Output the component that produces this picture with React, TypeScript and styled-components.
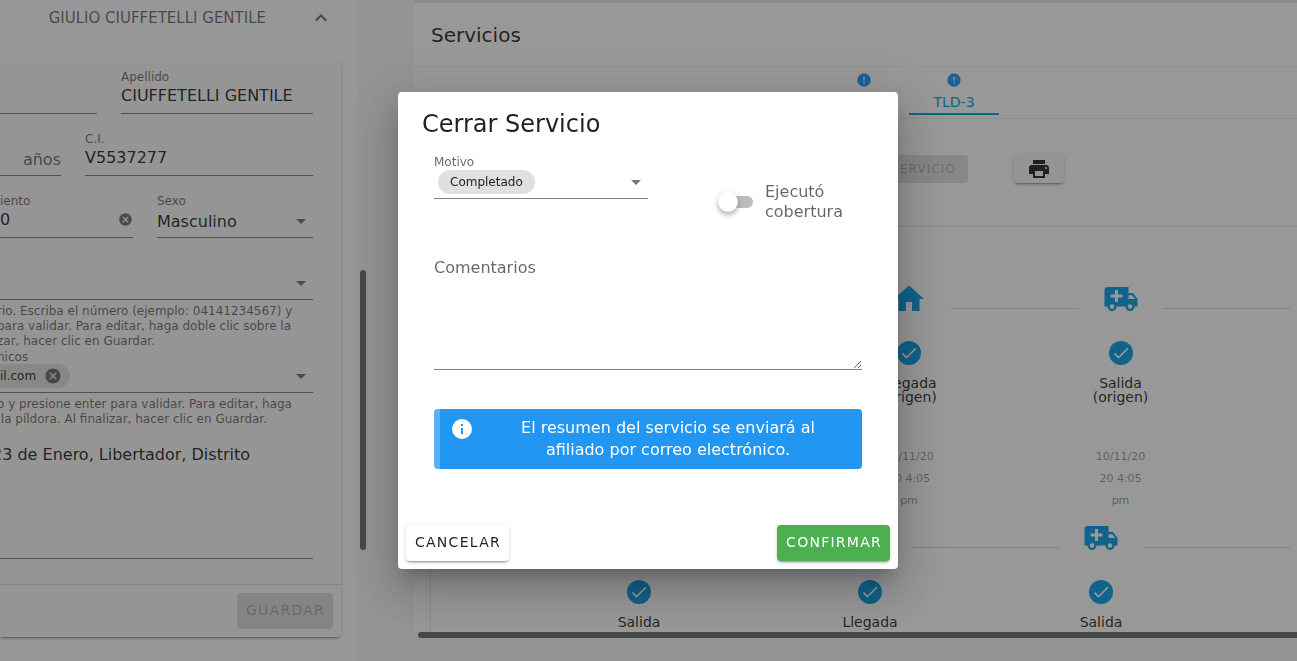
import React, { useState } from "react";
import styled, { createGlobalStyle } from "styled-components";

const ICONS = {
  home: "M10,20V14H14V20H19V12H22L12,3L2,12H5V20H10Z",
  ambulance:
    "M18,18.5A1.5,1.5 0 0,0 19.5,17A1.5,1.5 0 0,0 18,15.5A1.5,1.5 0 0,0 16.5,17A1.5,1.5 0 0,0 18,18.5M19.5,9.5H17V12H21.46L19.5,9.5M6,18.5A1.5,1.5 0 0,0 7.5,17A1.5,1.5 0 0,0 6,15.5A1.5,1.5 0 0,0 4.5,17A1.5,1.5 0 0,0 6,18.5M20,8L23,12V17H21A3,3 0 0,1 18,20A3,3 0 0,1 15,17H9A3,3 0 0,1 6,20A3,3 0 0,1 3,17H1V6C1,4.89 1.89,4 3,4H17V8H20M8,6V9H5V11H8V14H10V11H13V9H10V6H8Z",
  check: "M21,7L9,19L3.5,13.5L4.91,12.09L9,16.17L19.59,5.59L21,7Z",
  printer:
    "M18,3H6V7H18M19,12A1,1 0 0,1 18,11A1,1 0 0,1 19,10A1,1 0 0,1 20,11A1,1 0 0,1 19,12M16,19H8V14H16M19,8H5A3,3 0 0,0 2,11V17H6V21H18V17H22V11A3,3 0 0,0 19,8Z",
  alert:
    "M13,13H11V7H13M13,17H11V15H13M12,2A10,10 0 0,0 2,12A10,10 0 0,0 12,22A10,10 0 0,0 22,12A10,10 0 0,0 12,2Z",
  info: "M13,9H11V7H13M13,17H11V11H13M12,2A10,10 0 0,0 2,12A10,10 0 0,0 12,22A10,10 0 0,0 22,12A10,10 0 0,0 12,2Z",
  clear:
    "M12,2C17.53,2 22,6.47 22,12C22,17.53 17.53,22 12,22C6.47,22 2,17.53 2,12C2,6.47 6.47,2 12,2M15.59,7L12,10.59L8.41,7L7,8.41L10.59,12L7,15.59L8.41,17L12,13.41L15.59,17L17,15.59L13.41,12L17,8.41L15.59,7Z",
  down: "M7,10L12,15L17,10H7Z",
  up: "M7.41,15.41L12,10.83L16.59,15.41L18,14L12,8L6,14L7.41,15.41Z",
};

const Icon = ({ name, size = 24 }: { name: keyof typeof ICONS; size?: number }) => (
  <svg width={size} height={size} viewBox="0 0 24 24" fill="currentColor" aria-hidden="true">
    <path d={ICONS[name]} />
  </svg>
);

const Global = createGlobalStyle`
  *, *::before, *::after { box-sizing: border-box; }
  body {
    margin: 0;
    background: #f5f5f5;
    color: rgba(0, 0, 0, 0.87);
    font-family: "DejaVu Sans", sans-serif;
    font-size: 16px;
  }
  button, input, select, textarea { font: inherit; color: inherit; margin: 0; }
  svg { display: block; flex: none; }
`;

const Page = styled.div`
  display: flex;
  height: 100vh;
  overflow: hidden;
`;

/* ---------- affiliate panel ---------- */

const Side = styled.section`
  flex: none;
  width: 357px;
  overflow: hidden;
  background: #fcfcfc;
`;

const SideHeader = styled.button`
  display: flex;
  align-items: center;
  justify-content: flex-end;
  gap: 43px;
  width: 100%;
  height: 35px;
  padding: 0 24px 0 0;
  border: 0;
  background: none;
  font-size: 15px;
  color: rgba(0, 0, 0, 0.6);
`;

const SideCard = styled.form`
  margin: 25px 16px 0 0;
  background: #f8f8f8;
  border-radius: 0 4px 4px 0;
  box-shadow: 0 3px 1px -2px rgba(0, 0, 0, 0.2), 0 2px 2px 0 rgba(0, 0, 0, 0.14),
    0 1px 5px 0 rgba(0, 0, 0, 0.12);
`;

const SideBody = styled.div`
  padding: 8px 28px 25px 0;
`;

const FieldRow = styled.div<{ $columns: string }>`
  display: grid;
  grid-template-columns: ${(p) => p.$columns};
  gap: 24px;
  margin-bottom: 16px;
`;

const Contact = styled.div`
  margin-left: -3px;
`;

const Field = styled.div`
  display: flex;
  flex-direction: column;
  min-width: 0;
  border-bottom: 1px solid rgba(0, 0, 0, 0.5);
`;

const Label = styled.label`
  height: 16px;
  font-size: 12px;
  line-height: 18px;
  white-space: nowrap;
  color: rgba(0, 0, 0, 0.6);
`;

const Control = styled.div`
  display: flex;
  align-items: center;
  height: 22px;
  margin-bottom: 7px;
`;

const TextInput = styled.input`
  flex: 1;
  min-width: 0;
  height: 22px;
  padding: 0;
  border: 0;
  outline: 0;
  background: none;
`;

const Suffix = styled.span`
  padding-top: 4px;
  color: rgba(0, 0, 0, 0.6);
`;

const IconButton = styled.button`
  display: flex;
  padding: 0;
  border: 0;
  background: none;
  color: rgba(0, 0, 0, 0.54);
`;

const SelectBox = styled.div<{ $height: number; $gap: number }>`
  display: grid;
  grid-template-columns: 1fr 24px;
  align-items: center;
  height: ${(p) => p.$height}px;
  margin-bottom: ${(p) => p.$gap}px;

  > svg {
    grid-area: 1 / 2;
    color: rgba(0, 0, 0, 0.54);
    pointer-events: none;
  }
`;

const Select = styled.select<{ $chips?: boolean }>`
  grid-area: 1 / 1 / 2 / 3;
  width: 100%;
  height: 100%;
  padding: 0;
  border: 0;
  outline: 0;
  appearance: none;
  background: none;
  opacity: ${(p) => (p.$chips ? 0 : 1)};
`;

const Chip = styled.span<{ $open?: boolean }>`
  grid-area: 1 / 1;
  justify-self: start;
  display: flex;
  align-items: center;
  gap: 8px;
  height: 24px;
  margin-left: ${(p) => (p.$open ? 0 : 4)}px;
  padding: ${(p) => (p.$open ? "0 8px 0 3px" : "0 12px")};
  border-radius: ${(p) => (p.$open ? "0 12px 12px 0" : "12px")};
  background: #e0e0e0;
  font-size: 12px;
  pointer-events: none;
`;

const Hint = styled.p`
  margin: 4px 0 -1px;
  font-size: 12px;
  line-height: 15px;
  white-space: nowrap;
  color: rgba(0, 0, 0, 0.6);
`;

const Address = styled.textarea`
  display: block;
  width: calc(100% + 5px);
  height: 115px;
  margin: 18px 0 0 -5px;
  padding: 0;
  border: 0;
  border-bottom: 1px solid rgba(0, 0, 0, 0.5);
  outline: 0;
  resize: none;
  background: none;
  line-height: 22px;
`;

const SideFooter = styled.footer`
  display: flex;
  justify-content: flex-end;
  padding: 8px;
  border-top: 1px solid rgba(0, 0, 0, 0.12);
`;

const raised = `0 3px 1px -2px rgba(0, 0, 0, 0.2), 0 2px 2px 0 rgba(0, 0, 0, 0.14),
    0 1px 5px 0 rgba(0, 0, 0, 0.12)`;

const Button = styled.button<{ $tone?: "green" | "plain" }>`
  height: 36px;
  padding: 0 8px 2px 9px;
  border: 0;
  border-radius: 4px;
  background: ${(p) => (p.$tone === "green" ? "#4caf50" : "#fff")};
  box-shadow: ${raised};
  color: ${(p) => (p.$tone === "green" ? "#fff" : "rgba(0, 0, 0, 0.87)")};
  font-size: 14px;
  letter-spacing: 0.09em;

  &:disabled {
    background: rgba(0, 0, 0, 0.12);
    box-shadow: none;
    color: rgba(0, 0, 0, 0.26);
  }
`;

/* ---------- scroll bars ---------- */

const Gutter = styled.div`
  flex: none;
  width: 57px;
  padding: 270px 0 0 3px;
`;

const VerticalThumb = styled.div`
  width: 6px;
  height: 280px;
  border-radius: 3px;
  background: #6a6a6a;
`;

const HorizontalThumb = styled.div`
  flex: none;
  height: 6px;
  margin-left: 4px;
  border-radius: 3px 0 0 3px;
  background: #6a6a6a;
`;

/* ---------- services panel ---------- */

const Main = styled.main`
  flex: 1;
  min-width: 0;
  display: flex;
  flex-direction: column;
  padding-bottom: 23px;
  overflow: hidden;
`;

const Services = styled.section`
  flex: 1;
  min-height: 0;
  width: calc(100% + 107px);
  overflow: hidden;
  border-top: 3px solid #e6e6e6;
  border-radius: 4px 0 0 0;
  background: #fdfdfd;
`;

const ServicesTitle = styled.h2`
  height: 64px;
  margin: 0;
  padding-left: 17px;
  border-bottom: 1px solid rgba(0, 0, 0, 0.06);
  font-size: 20px;
  font-weight: 400;
  line-height: 64px;
`;

const Tabs = styled.nav`
  display: flex;
  justify-content: center;
  height: 52px;
  border-bottom: 1px solid rgba(0, 0, 0, 0.08);
`;

const Tab = styled.button<{ $active?: boolean }>`
  display: flex;
  flex-direction: column;
  align-items: center;
  gap: 6px;
  width: 90px;
  height: 48px;
  padding: 5px 0 0;
  border: 0;
  border-bottom: 2px solid ${(p) => (p.$active ? "#039be5" : "transparent")};
  background: none;
  color: ${(p) => (p.$active ? "#039be5" : "rgba(0, 0, 0, 0.54)")};
  font-size: 14px;

  svg {
    color: #2196f3;
  }
`;

const Actions = styled.div`
  display: flex;
  justify-content: center;
  gap: 46px;
  padding: 36px 0 44px;
`;

const ServiceButton = styled(Button)`
  width: 214px;
  height: 28px;
  padding: 0 12px;
  font-size: 12px;
  text-align: right;
`;

const PrintButton = styled(Button)`
  display: flex;
  align-items: center;
  justify-content: center;
  width: 50px;
  height: 28px;
  padding: 0;
  background: #f5f5f5;
`;

const Timeline = styled.div`
  display: flex;
  flex-direction: column;
  gap: 8px;
  margin: 0 30px 0 17px;
  padding-top: 54px;
  box-shadow: 0 0 2px rgba(0, 0, 0, 0.3);
`;

const Track = styled.ol<{ $start: number }>`
  display: flex;
  align-items: flex-start;
  margin: 0;
  padding: 0 0 0 ${(p) => p.$start}px;
  list-style: none;
`;

const Step = styled.li`
  flex: none;
  display: flex;
  flex-direction: column;
  align-items: center;
  width: 84px;
  color: #039be5;
  text-align: center;
`;

const Line = styled.li`
  flex: 1;
  height: 1px;
  margin-top: 27px;
  background: rgba(0, 0, 0, 0.16);
`;

const Done = styled.span`
  display: flex;
  align-items: center;
  justify-content: center;
  width: 24px;
  height: 24px;
  margin: 24px 0 11px;
  border-radius: 50%;
  background: #039be5;
  color: #fff;
`;

const StepLabel = styled.span`
  height: 28px;
  margin-bottom: 42px;
  font-size: 14px;
  line-height: 14px;
  color: rgba(0, 0, 0, 0.87);
`;

const StepDate = styled.time`
  font-size: 11px;
  line-height: 22px;
  color: rgba(0, 0, 0, 0.45);
`;

/* ---------- dialog ---------- */

const Overlay = styled.div`
  position: fixed;
  inset: 0;
  display: flex;
  align-items: center;
  justify-content: center;
  padding-right: 1px;
  background: rgba(33, 33, 33, 0.46);
`;

const Dialog = styled.div`
  width: 500px;
  max-width: 90%;
  border-radius: 4px;
  background: #fff;
  box-shadow: 0 11px 15px -7px rgba(0, 0, 0, 0.2), 0 24px 38px 3px rgba(0, 0, 0, 0.14),
    0 9px 46px 8px rgba(0, 0, 0, 0.12);
`;

const DialogTitle = styled.h1`
  margin: 0;
  padding: 16px 24px 13px;
  font-size: 24px;
  font-weight: 400;
  line-height: 32px;
`;

const DialogBody = styled.div`
  padding: 0 36px;
`;

const DialogRow = styled.div`
  display: grid;
  grid-template-columns: 1fr 142px;
  gap: 72px;
  align-items: start;
  margin-bottom: 36px;
`;

const SwitchLabel = styled.label`
  display: flex;
  align-items: center;
  gap: 12px;
  padding-top: 29px;
  line-height: 20px;
  color: rgba(0, 0, 0, 0.6);
`;

const Switch = styled.input`
  flex: none;
  display: flex;
  align-items: center;
  width: 33px;
  height: 12px;
  border-radius: 6px;
  appearance: none;
  background: #bdbdbd;

  &::before {
    content: "";
    width: 20px;
    height: 20px;
    margin-left: -2px;
    border-radius: 50%;
    background: #fff;
    box-shadow: 0 2px 4px -1px rgba(0, 0, 0, 0.2), 0 4px 5px 0 rgba(0, 0, 0, 0.14),
      0 1px 10px 0 rgba(0, 0, 0, 0.12);
  }

  &:checked::before {
    margin-left: 16px;
  }
`;

const Comments = styled.textarea`
  display: block;
  width: 100%;
  height: 112px;
  padding: 0;
  border: 0;
  border-bottom: 1px solid rgba(0, 0, 0, 0.5);
  outline: 0;
  resize: vertical;
  background: none;
  line-height: 20px;

  &::placeholder {
    color: rgba(0, 0, 0, 0.6);
    opacity: 1;
  }
`;

const Notice = styled.div`
  display: flex;
  align-items: flex-start;
  gap: 16px;
  margin-top: 39px;
  padding: 8px 16px 8px 10px;
  border-left: 6px solid #59b0f6;
  border-radius: 4px;
  background: #2196f3;
  color: #fff;
  line-height: 22px;

  p {
    flex: 1;
    margin: 0;
    text-align: center;
  }
`;

const DialogActions = styled.footer`
  display: flex;
  justify-content: space-between;
  margin-top: 48px;
  padding: 8px;
`;

type StepInfo = { icon: "home" | "ambulance"; label: string; place?: string; date?: string[] };

const date = ["10/11/20", "20 4:05", "pm"];

const firstLeg: StepInfo[] = [
  { icon: "home", label: "Llegada", place: "(origen)", date },
  { icon: "ambulance", label: "Salida", place: "(origen)", date },
];

const secondLeg: StepInfo[] = [
  { icon: "ambulance", label: "Salida" },
  { icon: "home", label: "Llegada" },
  { icon: "ambulance", label: "Salida" },
];

const Leg = ({ steps, start }: { steps: StepInfo[]; start: number }) => (
  <Track $start={start}>
    {steps.map((step, i) => (
      <React.Fragment key={i}>
        <Step>
          <Icon name={step.icon} size={36} />
          <Done>
            <Icon name="check" size={20} />
          </Done>
          <StepLabel>
            {step.label}
            <br />
            {step.place}
          </StepLabel>
          {step.date && (
            <StepDate>
              {step.date[0]}
              <br />
              {step.date[1]}
              <br />
              {step.date[2]}
            </StepDate>
          )}
        </Step>
        <Line aria-hidden="true" />
      </React.Fragment>
    ))}
    <Step aria-hidden="true" />
  </Track>
);

export default function App() {
  const [reason, setReason] = useState("Completado");
  return (
    <>
      <Global />
      <Page>
        <Side>
          <SideHeader type="button">
            GIULIO CIUFFETELLI GENTILE
            <Icon name="up" />
          </SideHeader>
          <SideCard>
            <SideBody>
              <FieldRow $columns="1fr 192px">
                <Field>
                  <Label />
                  <Control>
                    <TextInput aria-label="Nombre" />
                  </Control>
                </Field>
                <Field>
                  <Label htmlFor="apellido">Apellido</Label>
                  <Control>
                    <TextInput id="apellido" defaultValue="CIUFFETELLI GENTILE" />
                  </Control>
                </Field>
              </FieldRow>
              <FieldRow $columns="1fr 228px">
                <Field>
                  <Label />
                  <Control>
                    <TextInput aria-label="Edad" />
                    <Suffix>años</Suffix>
                  </Control>
                </Field>
                <Field>
                  <Label htmlFor="ci">C.I.</Label>
                  <Control>
                    <TextInput id="ci" defaultValue="V5537277" />
                  </Control>
                </Field>
              </FieldRow>
              <FieldRow $columns="1fr 156px">
                <Field>
                  <Label htmlFor="nacimiento">iento</Label>
                  <Control>
                    <TextInput id="nacimiento" defaultValue="0" />
                    <IconButton type="button" aria-label="Borrar fecha">
                      <Icon name="clear" size={15} />
                    </IconButton>
                  </Control>
                </Field>
                <Field>
                  <Label htmlFor="sexo">Sexo</Label>
                  <SelectBox $height={26} $gap={3}>
                    <Select id="sexo">
                      <option>Masculino</option>
                      <option>Femenino</option>
                    </Select>
                    <Icon name="down" />
                  </SelectBox>
                </Field>
              </FieldRow>
              <Contact>
                <Field>
                  <Label />
                  <SelectBox $height={26} $gap={3}>
                    <Select aria-label="Teléfonos" />
                    <Icon name="down" />
                  </SelectBox>
                </Field>
                <Hint>
                  rio. Escriba el número (ejemplo: 04141234567) y
                  <br />
                  para validar. Para editar, haga doble clic sobre la
                  <br />
                  zar, hacer clic en Guardar.
                </Hint>
                <Field>
                  <Label htmlFor="correos">nicos</Label>
                  <SelectBox $height={24} $gap={4}>
                    <Select id="correos" $chips />
                    <Chip $open>
                      il.com
                      <IconButton type="button" aria-label="Quitar correo">
                        <Icon name="clear" size={18} />
                      </IconButton>
                    </Chip>
                    <Icon name="down" />
                  </SelectBox>
                </Field>
                <Hint>
                  o y presione enter para validar. Para editar, haga
                  <br />
                  &nbsp;la píldora. Al finalizar, hacer clic en Guardar.
                </Hint>
                <Address aria-label="Dirección" defaultValue="23 de Enero, Libertador, Distrito" />
              </Contact>
            </SideBody>
            <SideFooter>
              <Button type="button" disabled>
                GUARDAR
              </Button>
            </SideFooter>
          </SideCard>
        </Side>

        <Gutter>
          <VerticalThumb />
        </Gutter>

        <Main>
          <Services>
            <ServicesTitle>Servicios</ServicesTitle>
            <Tabs>
              <Tab type="button">
                <Icon name="alert" size={16} />
                TLD-2
              </Tab>
              <Tab type="button" $active>
                <Icon name="alert" size={16} />
                TLD-3
              </Tab>
            </Tabs>
            <Actions>
              <ServiceButton type="button" disabled>
                CERRAR SERVICIO
              </ServiceButton>
              <PrintButton type="button" aria-label="Imprimir">
                <Icon name="printer" />
              </PrintButton>
            </Actions>
            <Timeline>
              <Leg steps={firstLeg} start={436} />
              <Leg steps={secondLeg} start={166} />
            </Timeline>
          </Services>
          <HorizontalThumb />
        </Main>
      </Page>

      <Overlay>
        <Dialog role="dialog" aria-modal="true" aria-labelledby="dialog-title">
          <DialogTitle id="dialog-title">Cerrar Servicio</DialogTitle>
          <DialogBody>
            <DialogRow>
              <Field>
                <Label htmlFor="motivo">Motivo</Label>
                <SelectBox $height={25} $gap={4}>
                  <Select
                    id="motivo"
                    $chips
                    value={reason}
                    onChange={(e) => setReason(e.target.value)}
                  >
                    <option>Completado</option>
                    <option>Cancelado</option>
                  </Select>
                  <Chip>{reason}</Chip>
                  <Icon name="down" />
                </SelectBox>
              </Field>
              <SwitchLabel>
                <Switch type="checkbox" role="switch" />
                Ejecutó cobertura
              </SwitchLabel>
            </DialogRow>
            <Comments aria-label="Comentarios" placeholder="Comentarios" />
            <Notice role="status">
              <Icon name="info" />
              <p>El resumen del servicio se enviará al afiliado por correo electrónico.</p>
            </Notice>
          </DialogBody>
          <DialogActions>
            <Button type="button" $tone="plain">
              CANCELAR
            </Button>
            <Button type="button" $tone="green">
              CONFIRMAR
            </Button>
          </DialogActions>
        </Dialog>
      </Overlay>
    </>
  );
}
